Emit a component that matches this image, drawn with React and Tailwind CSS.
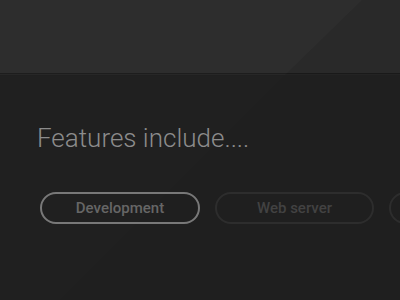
export default function App() {
  return (
    <div className="relative w-[400px] h-[300px] overflow-hidden bg-[#1f1f1f]" style={{ fontFamily: 'Roboto, "Open Sans", sans-serif' }}>
      {/* header band */}
      <div className="h-[74px] bg-[#292929] border-b border-[#191919]" />
      <div className="h-px bg-[#232323]" />
      {/* diagonal gloss */}
      <svg className="absolute inset-0 pointer-events-none" width="400" height="300">
        <polygon points="0,0 362,0 285,75 0,75" fill="#ffffff" opacity="0.018" />
        <polygon points="0,76 284,76 60,300 0,300" fill="#ffffff" opacity="0.008" />
      </svg>

      <div className="relative pl-[37px] pt-[50px]">
        <h1 className="text-[26px] font-light text-[#8c8c8c] leading-none">Features include....</h1>
        <div className="mt-[41px] flex gap-[15px] pl-[3px] whitespace-nowrap">
          <div className="w-[160px] h-[32px] shrink-0 rounded-full border-2 border-[#787878] flex items-center justify-center text-[15px] font-medium text-[#666666]">
            Development
          </div>
          <div className="w-[159px] h-[32px] shrink-0 rounded-full border-2 border-[#2d2d2d] flex items-center justify-center text-[15px] font-medium text-[#424242]">
            Web server
          </div>
          <div className="w-[159px] h-[32px] shrink-0 rounded-full border-2 border-[#2d2d2d]" />
        </div>
      </div>
    </div>
  );
}
